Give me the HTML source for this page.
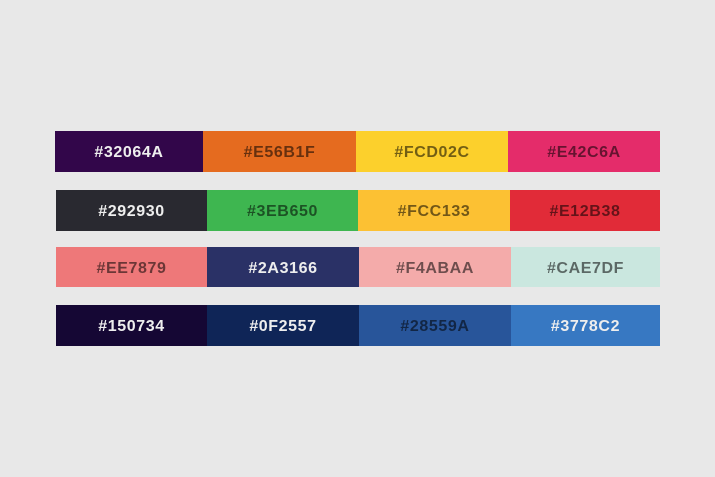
<!DOCTYPE html><html><head><style>
body{margin:0;width:715px;height:477px;background:#e8e8e8;position:relative;overflow:hidden;font-family:"Liberation Sans",sans-serif;}
div.c{position:absolute;display:flex;align-items:center;justify-content:center;font-weight:bold;font-size:16px;letter-spacing:0.6px;padding-top:3px;box-sizing:border-box;}
.w{color:#eee}.d{color:rgba(0,0,0,.55)}
</style></head><body>
<div class="c w" style="left:55px;top:131px;width:148px;height:41px;background:#32064A">#32064A</div>
<div class="c d" style="left:203px;top:131px;width:153px;height:41px;background:#E56B1F">#E56B1F</div>
<div class="c d" style="left:356px;top:131px;width:152px;height:41px;background:#FCD02C">#FCD02C</div>
<div class="c d" style="left:508px;top:131px;width:152px;height:41px;background:#E42C6A">#E42C6A</div>

<div class="c w" style="left:56px;top:190px;width:151px;height:41px;background:#292930">#292930</div>
<div class="c d" style="left:207px;top:190px;width:151px;height:41px;background:#3EB650">#3EB650</div>
<div class="c d" style="left:358px;top:190px;width:152px;height:41px;background:#FCC133">#FCC133</div>
<div class="c d" style="left:510px;top:190px;width:150px;height:41px;background:#E12B38">#E12B38</div>

<div class="c d" style="left:56px;top:247px;width:151px;height:40px;background:#EE7879">#EE7879</div>
<div class="c w" style="left:207px;top:247px;width:152px;height:40px;background:#2A3166">#2A3166</div>
<div class="c d" style="left:359px;top:247px;width:152px;height:40px;background:#F4ABAA">#F4ABAA</div>
<div class="c d" style="left:511px;top:247px;width:149px;height:40px;background:#CAE7DF">#CAE7DF</div>

<div class="c w" style="left:56px;top:305px;width:151px;height:41px;background:#150734">#150734</div>
<div class="c w" style="left:207px;top:305px;width:152px;height:41px;background:#0F2557">#0F2557</div>
<div class="c d" style="left:359px;top:305px;width:152px;height:41px;background:#28559A">#28559A</div>
<div class="c w" style="left:511px;top:305px;width:149px;height:41px;background:#3778C2">#3778C2</div>
</body></html>
